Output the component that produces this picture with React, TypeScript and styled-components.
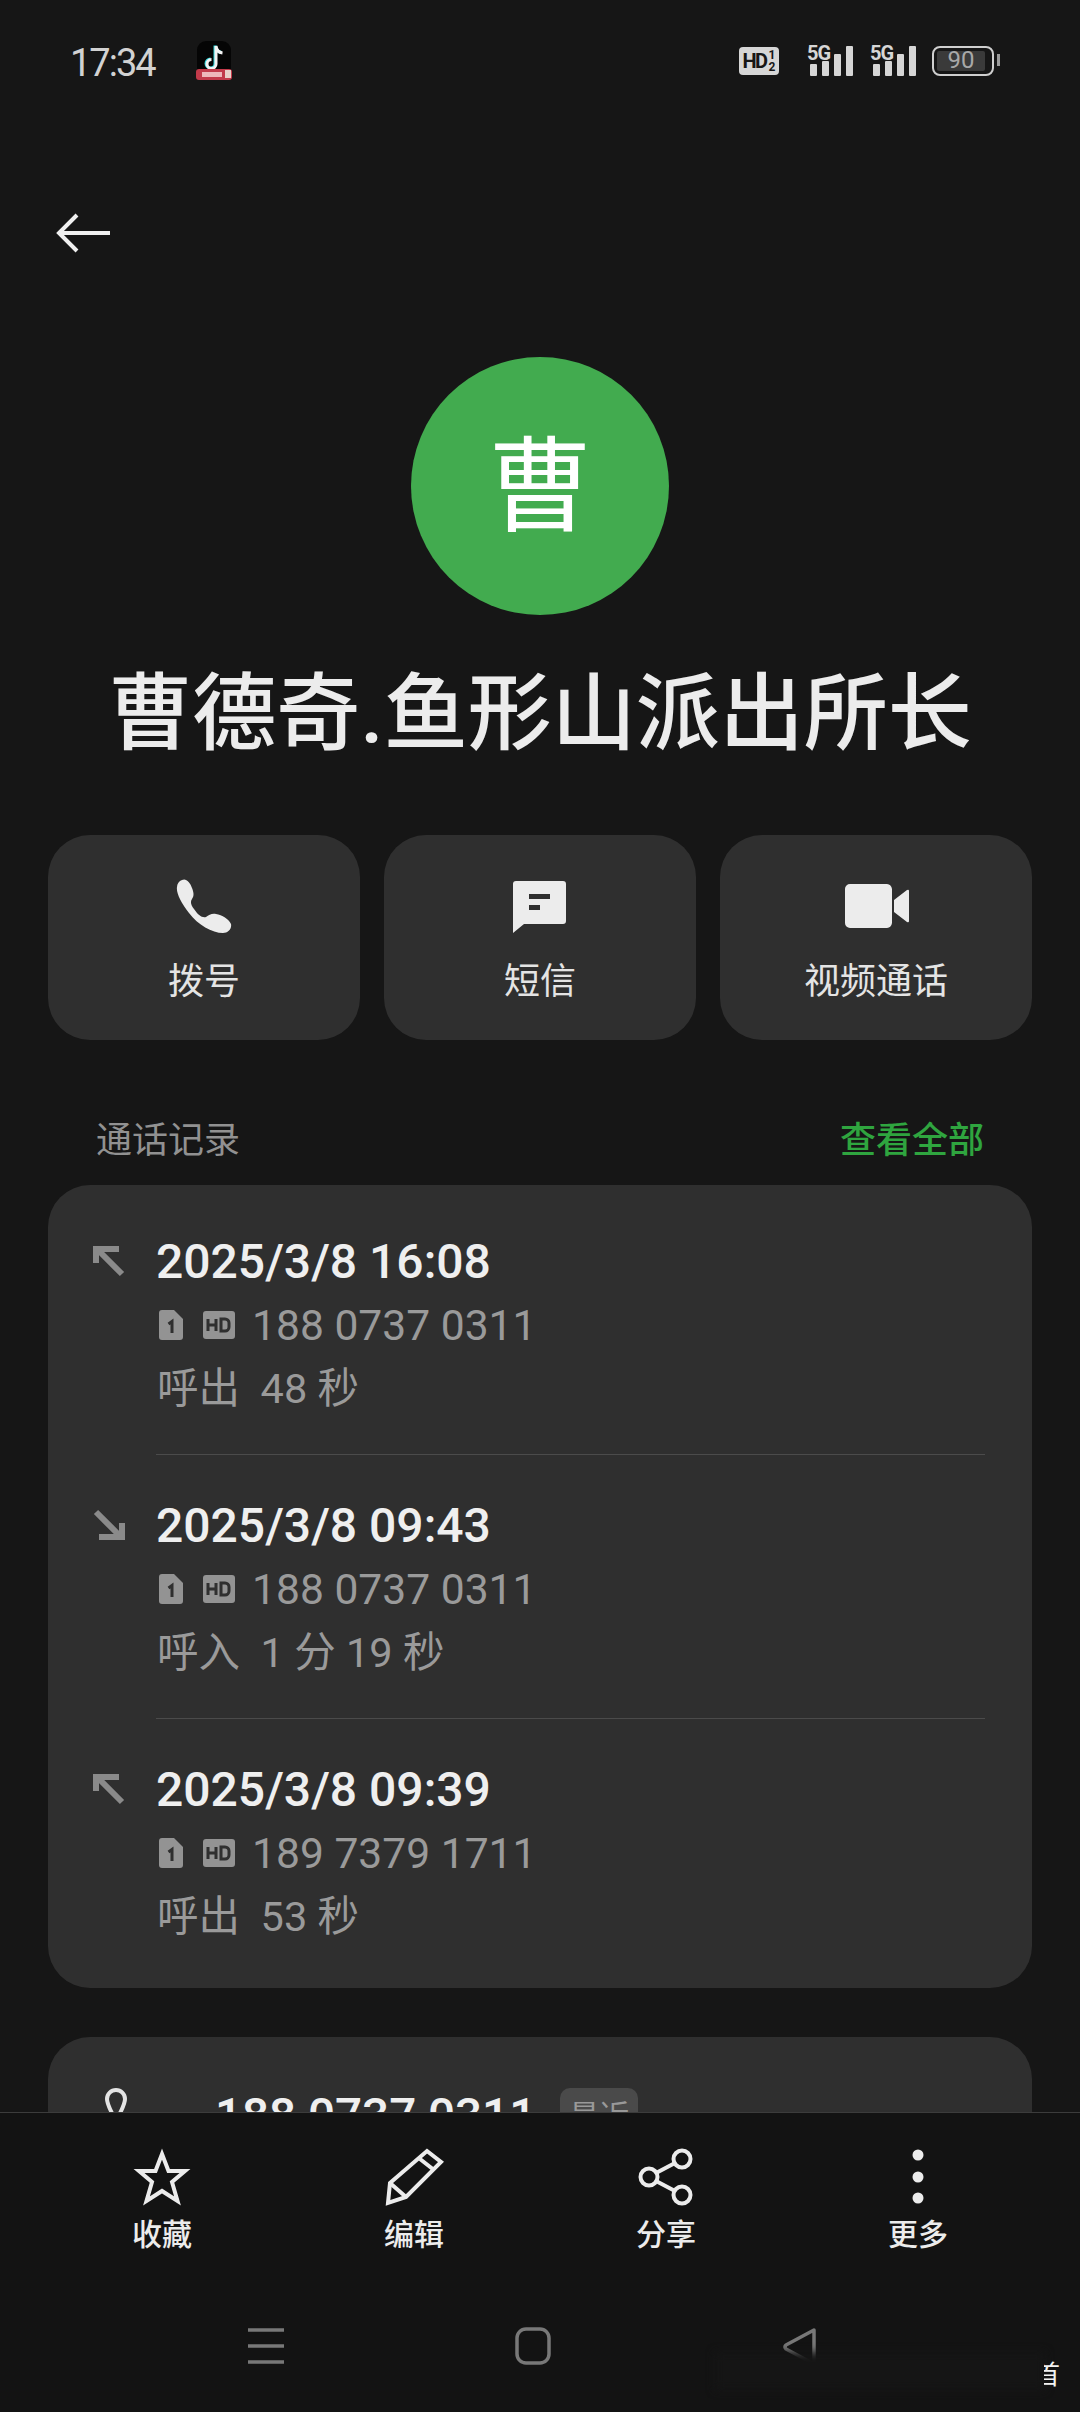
import * as React from "react";
import styled, { createGlobalStyle } from "styled-components";

const GlobalStyle = createGlobalStyle`
  html, body {
    margin: 0;
    padding: 0;
    background: #161616;
  }
  body {
    font-family: Roboto, "Noto Sans CJK SC", sans-serif;
  }
`;

const Page = styled.div`
  position: relative;
  width: 1080px;
  height: 2412px;
  display: flex;
  flex-direction: column;
  overflow: hidden;
  background: #161616;
`;

const Scroller = styled.div`
  height: 2112px;
  flex: none;
  overflow: hidden;
`;

const StatusBar = styled.div`
  height: 122px;
  display: flex;
  align-items: center;
  padding: 0 86px 0 70px;
  box-sizing: border-box;
`;

const Clock = styled.span`
  font-size: 38px;
  letter-spacing: -2px;
  color: #d2d2d2;
  line-height: 1;
  padding-top: 3px;
`;

const AppBadge = styled.svg`
  width: 36px;
  height: 40px;
  margin-left: 41px;
`;

const StatusRight = styled.div`
  margin-left: auto;
  display: flex;
  align-items: center;
`;

const HdChip = styled.div`
  width: 40px;
  height: 28px;
  border-radius: 4px;
  background: #d6d6d6;
  color: #161616;
  display: flex;
  align-items: center;
  justify-content: center;
  font-size: 20px;
  font-weight: 700;
  letter-spacing: -1.5px;
  line-height: 1;
`;

const Frac = styled.span`
  display: flex;
  flex-direction: column;
  margin-left: 2px;
  font-size: 12px;
  line-height: 12px;
  letter-spacing: 0;
`;

const Signal = styled.div<{ $gap: number }>`
  position: relative;
  width: 46px;
  height: 32px;
  margin-left: ${(p) => p.$gap}px;
  flex: none;
`;

const FiveG = styled.span`
  position: absolute;
  left: 0;
  top: -2px;
  font-size: 20px;
  font-weight: 700;
  letter-spacing: -1px;
  color: #d6d6d6;
  line-height: 1;
`;

const Bars = styled.svg`
  position: absolute;
  left: 3px;
  top: 0;
  width: 44px;
  height: 32px;
`;

const Battery = styled.div`
  width: 62px;
  height: 30px;
  margin-left: 16px;
  box-sizing: border-box;
  border: 2.5px solid #cfcfcf;
  border-radius: 8px;
  padding: 3px;
  position: relative;
  display: flex;
  &::after {
    content: "";
    position: absolute;
    right: -8px;
    top: 6px;
    width: 3px;
    height: 12px;
    background: #9a9a9a;
  }
`;

const BatteryFill = styled.div`
  width: 48px;
  background: #3a3a3a;
  color: #a8a8a8;
  border-radius: 2px;
  font-size: 24px;
  line-height: 19px;
  text-align: center;
`;

const Header = styled.div`
  height: 130px;
  padding: 91px 0 0 56px;
  box-sizing: border-box;
`;

const BackIcon = styled.svg`
  display: block;
  width: 56px;
  height: 40px;
`;

const Avatar = styled.div`
  width: 258px;
  height: 258px;
  margin: 105px auto 0;
  padding-top: 6px;
  box-sizing: border-box;
  border-radius: 50%;
  background: #42ab4f;
  color: #fff;
  display: flex;
  align-items: center;
  justify-content: center;
  font-size: 104px;
  line-height: 1;
`;

const Name = styled.h1`
  margin: 50px 0 0;
  height: 100px;
  text-align: center;
  font-size: 84px;
  line-height: 100px;
  font-weight: 500;
  color: #ececec;
  white-space: nowrap;
`;

const Actions = styled.div`
  display: grid;
  grid-template-columns: repeat(3, 1fr);
  gap: 24px;
  margin-top: 70px;
  padding: 0 48px;
`;

const ActionButton = styled.div`
  height: 205px;
  border-radius: 42px;
  background: #2f2f2f;
  display: flex;
  flex-direction: column;
  align-items: center;
  padding-top: 44px;
  box-sizing: border-box;
`;

const ActionIcon = styled.svg`
  display: block;
  height: 56px;
  width: 66px;
  fill: #ececec;
`;

const ActionLabel = styled.span`
  margin-top: 22px;
  font-size: 36px;
  line-height: 50px;
  color: #e4e4e4;
`;

const SectionHead = styled.div`
  display: flex;
  justify-content: space-between;
  align-items: center;
  height: 60px;
  margin-top: 67px;
  padding: 0 96px;
  font-size: 36px;
`;

const SectionTitle = styled.span`
  color: #919191;
`;

const SectionLink = styled.span`
  color: #2fa53f;
  font-weight: 500;
`;

const Card = styled.div`
  margin: 18px 48px 0;
  border-radius: 42px;
  background: #2f2f2f;
  padding: 6px 47px 41px 45px;
`;

const CallRow = styled.div`
  display: flex;
  align-items: flex-start;
  padding-top: 40px;
`;

const CallArrow = styled.svg`
  flex: none;
  width: 32px;
  height: 32px;
  margin: 14px 31px 0 0;
`;

const CallBody = styled.div<{ $divider: boolean }>`
  flex: 1;
  padding-bottom: ${(p) => (p.$divider ? "35px" : "0")};
  border-bottom: ${(p) => (p.$divider ? "1px solid #4b4b4b" : "none")};
`;

const CallTime = styled.div`
  font-size: 48px;
  font-weight: 500;
  line-height: 60px;
  color: #efefef;
  padding-top: 1px;
  margin-bottom: -1px;
`;

const CallNumber = styled.div`
  display: flex;
  align-items: center;
  height: 68px;
  font-size: 42.6px;
  color: #9a9a9a;
`;

const SimIcon = styled.svg`
  width: 24px;
  height: 30px;
  margin: 0 20px 0 3px;
`;

const HdIcon = styled.svg`
  width: 32px;
  height: 28px;
  margin-right: 17px;
`;

const CallDuration = styled.div`
  height: 60px;
  line-height: 60px;
  margin-left: 1px;
  font-size: 41.5px;
  color: #9a9a9a;
  white-space: pre;
`;

const NumberCard = styled.div`
  margin: 49px 48px 0;
  height: 200px;
  border-radius: 42px;
  background: #2f2f2f;
  padding: 51px 0 0 57px;
  box-sizing: border-box;
  display: flex;
  align-items: flex-start;
`;

const PinIcon = styled.svg`
  width: 22px;
  height: 50px;
  margin-right: 88px;
`;

const NumberText = styled.span`
  font-size: 47.6px;
  font-weight: 500;
  line-height: 60px;
  color: #efefef;
  margin-top: -2px;
`;

const RecentTag = styled.span`
  margin-left: 24px;
  padding: 0 9px;
  height: 56px;
  border-radius: 10px;
  background: #4a4a4a;
  color: #999;
  font-size: 30px;
  line-height: 56px;
`;

const BottomBar = styled.div`
  height: 300px;
  flex: none;
  box-sizing: border-box;
  border-top: 1px solid #3c3c3c;
  background: #131313;
  padding-top: 35px;
`;

const Tools = styled.div`
  display: grid;
  grid-template-columns: repeat(4, 252px);
  padding-left: 36px;
`;

const Tool = styled.div`
  display: flex;
  flex-direction: column;
  align-items: center;
`;

const ToolIcon = styled.svg`
  display: block;
  width: 64px;
  height: 58px;
  fill: none;
  stroke: #ececec;
  stroke-width: 4;
`;

const ToolLabel = styled.span`
  margin-top: 9px;
  font-size: 30px;
  font-weight: 500;
  line-height: 40px;
  color: #ececec;
`;

const NavBar = styled.div`
  display: grid;
  grid-template-columns: repeat(3, 267px);
  margin-top: 72px;
  padding-left: 132px;
`;

const NavIcon = styled.svg`
  display: block;
  justify-self: center;
  width: 38px;
  height: 38px;
  fill: none;
  stroke: #787878;
  stroke-width: 3.5;
`;

const Smudge = styled.div`
  position: absolute;
  left: 715px;
  top: 2352px;
  width: 330px;
  height: 38px;
  background: #151515;
  filter: blur(4px);
`;

const Watermark = styled.span`
  position: absolute;
  left: 1034px;
  top: 2360px;
  width: 26px;
  font-size: 26px;
  line-height: 30px;
  color: #f2f2f2;
  clip-path: inset(0 0 0 10px);
`;

const calls = [
  { dir: "out", time: "2025/3/8 16:08", number: "188 0737 0311", duration: "呼出  48 秒" },
  { dir: "in", time: "2025/3/8 09:43", number: "188 0737 0311", duration: "呼入  1 分 19 秒" },
  { dir: "out", time: "2025/3/8 09:39", number: "189 7379 1711", duration: "呼出  53 秒" },
];

const SignalBars = () => (
  <Bars viewBox="0 0 44 32" fill="#d6d6d6">
    <rect x="0" y="19" width="7" height="12" rx="1" />
    <rect x="12" y="16" width="7" height="15" rx="1" />
    <rect x="24" y="9" width="7" height="22" rx="1" />
    <rect x="36" y="1" width="7" height="30" rx="1" />
  </Bars>
);

const App = () => {
  return (
    <Page>
      <GlobalStyle />
      <Scroller>
        <StatusBar>
          <Clock>17:34</Clock>
          <AppBadge viewBox="0 0 36 40">
            <rect x="1" y="0" width="34" height="38" rx="9" fill="#050505" />
            <path d="M20 5v18a4.5 4.5 0 1 1-4.5-4.5M20 5c.5 4 3 6.5 6.5 7" fill="none" stroke="#32d6dc" strokeWidth="3" transform="translate(-1 -.5)" />
            <path d="M20 5v18a4.5 4.5 0 1 1-4.5-4.5M20 5c.5 4 3 6.5 6.5 7" fill="none" stroke="#f4f4f4" strokeWidth="3" />
            <rect x="0" y="28" width="36" height="11" rx="3" fill="#c23a4a" />
            <rect x="6" y="31" width="20" height="5" fill="#eeb7ba" />
            <rect x="29" y="29" width="6" height="8" fill="#e8d0c8" />
          </AppBadge>
          <StatusRight>
            <HdChip>
              HD
              <Frac>
                <span>1</span>
                <span>2</span>
              </Frac>
            </HdChip>
            <Signal $gap={28}>
              <SignalBars />
              <FiveG>5G</FiveG>
            </Signal>
            <Signal $gap={17}>
              <SignalBars />
              <FiveG>5G</FiveG>
            </Signal>
            <Battery>
              <BatteryFill>90</BatteryFill>
            </Battery>
          </StatusRight>
        </StatusBar>

        <Header>
          <BackIcon viewBox="0 0 56 40" fill="none" stroke="#f0f0f0" strokeWidth="4">
            <path d="M54 20H4" />
            <path d="M21 2 3 20l18 18" />
          </BackIcon>
        </Header>

        <Avatar>曹</Avatar>
        <Name>曹德奇.鱼形山派出所长</Name>

        <Actions>
          <ActionButton>
            <ActionIcon viewBox="-5 0 66 56">
              <path d="M6 1C10-1 14 3 16 9c2 5 2 8 0 11-2 3-1 6 2 10 4 6 8 9 12 8 3-2 6-4 10-3 6 1 13 5 15 10 1 5-3 9-8 9C36 54 22 46 13 34 5 24 0 14 1 8c0-3 2-6 5-7Z" />
            </ActionIcon>
            <ActionLabel>拨号</ActionLabel>
          </ActionButton>
          <ActionButton>
            <ActionIcon viewBox="-6 -2 66 56">
              <path
                fillRule="evenodd"
                d="M3 0h47a3 3 0 0 1 3 3v37a3 3 0 0 1-3 3H11l-11 9V3a3 3 0 0 1 3-3Zm13 13v5h21v-5Zm0 11v5h11v-5Z"
              />
            </ActionIcon>
            <ActionLabel>短信</ActionLabel>
          </ActionButton>
          <ActionButton>
            <ActionIcon viewBox="-2 -5 66 56">
              <path d="M5 0h37a6 6 0 0 1 5 5v34a6 6 0 0 1-5 5H5a5 5 0 0 1-5-5V5a5 5 0 0 1 5-5Zm44 16 13-10q2-1 2 1v30q0 2-2 1L49 28Z" />
            </ActionIcon>
            <ActionLabel>视频通话</ActionLabel>
          </ActionButton>
        </Actions>

        <SectionHead>
          <SectionTitle>通话记录</SectionTitle>
          <SectionLink>查看全部</SectionLink>
        </SectionHead>

        <Card>
          {calls.map((call, i) => (
            <CallRow key={call.time}>
              <CallArrow viewBox="0 0 32 32" fill="none" stroke="#8a8a8a" strokeWidth="6">
                {call.dir === "out" ? (
                  <path d="M29 29 5 5M3 18V4h23" />
                ) : (
                  <path d="M3 3l24 24M29 14v14H6" />
                )}
              </CallArrow>
              <CallBody $divider={i < calls.length - 1}>
                <CallTime>{call.time}</CallTime>
                <CallNumber>
                  <SimIcon viewBox="0 0 24 30">
                    <path d="M3 0h12l9 9v18a3 3 0 0 1-3 3H3a3 3 0 0 1-3-3V3a3 3 0 0 1 3-3Z" fill="#939393" />
                    <path d="M9.5 14l3.5-2.5V23" fill="none" stroke="#2f2f2f" strokeWidth="3" />
                  </SimIcon>
                  <HdIcon viewBox="0 0 32 28">
                    <rect width="32" height="28" rx="3" fill="#939393" />
                    <path d="M5 8v12M13 8v12M5 14h8M18 8v12h4a4 4 0 0 0 4-4v-4a4 4 0 0 0-4-4Z" fill="none" stroke="#2f2f2f" strokeWidth="3" />
                  </HdIcon>
                  {call.number}
                </CallNumber>
                <CallDuration>{call.duration}</CallDuration>
              </CallBody>
            </CallRow>
          ))}
        </Card>

        <NumberCard>
          <PinIcon viewBox="0 0 22 50" fill="none" stroke="#e4e4e4" strokeWidth="4">
            <path d="M11 2c5 0 9 4 9 9 0 6-5 14-9 22C7 25 2 17 2 11c0-5 4-9 9-9Z" />
          </PinIcon>
          <NumberText>188 0737 0311</NumberText>
          <RecentTag>最近</RecentTag>
        </NumberCard>
      </Scroller>

      <BottomBar>
        <Tools>
          <Tool>
            <ToolIcon viewBox="0 0 64 58">
              <path d="M32 6l6.500 17H55L42 34l5.500 19L32 43 16.500 53 22 34 9 23h16.500Z" />
            </ToolIcon>
            <ToolLabel>收藏</ToolLabel>
          </Tool>
          <Tool>
            <ToolIcon viewBox="0 0 64 58">
              <path d="M45 3l14 11-35 35-18 6 2-20Z" />
              <path d="M38 11l14 11M8 35l16 14" />
            </ToolIcon>
            <ToolLabel>编辑</ToolLabel>
          </Tool>
          <Tool>
            <ToolIcon viewBox="0 0 64 58">
              <circle cx="48" cy="11" r="8.5" />
              <circle cx="15" cy="29" r="8.5" />
              <circle cx="48" cy="47" r="8.5" />
              <path d="M22 25 41 15M22 33l19 10" />
            </ToolIcon>
            <ToolLabel>分享</ToolLabel>
          </Tool>
          <Tool>
            <ToolIcon viewBox="0 0 64 58">
              <circle cx="32" cy="7" r="5.5" fill="#ececec" stroke="none" />
              <circle cx="32" cy="29" r="5.5" fill="#ececec" stroke="none" />
              <circle cx="32" cy="50" r="5.5" fill="#ececec" stroke="none" />
            </ToolIcon>
            <ToolLabel>更多</ToolLabel>
          </Tool>
        </Tools>
        <NavBar>
          <NavIcon viewBox="0 0 38 38">
            <path d="M1 3h36M1 19h36M1 35h36" />
          </NavIcon>
          <NavIcon viewBox="0 0 38 38">
            <rect x="3" y="2" width="32" height="34" rx="9" />
          </NavIcon>
          <NavIcon viewBox="0 0 38 38">
            <path d="M33 3 5 18q-2 2 0 4l28 15Z" strokeLinejoin="round" />
          </NavIcon>
        </NavBar>
      </BottomBar>

      <Smudge />
      <Watermark>首</Watermark>
    </Page>
  );
};

export default App;
